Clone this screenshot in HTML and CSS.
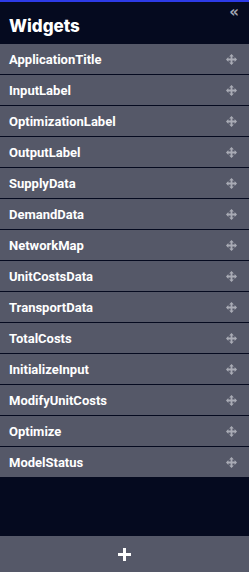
FILE: index.html
```html
<!DOCTYPE html>
<html lang="en">
<head>
  <meta charset="UTF-8" />
  <title>Widgets</title>
  <link rel="stylesheet" href="styles.css">
</head>
<body>
  <div class="panel">
    <div class="panel-head">
      <h1>Widgets</h1>
      <span class="collapse">&laquo;</span>
    </div>
    <div class="widget-list">
      <div class="widget-row"><span>ApplicationTitle</span><svg class="move" viewBox="0 0 12 12"><path d="M6 0L3.4 2.6h1.6v2.4H2.6V3.4L0 6l2.6 2.6V7h2.4v2.4H3.4L6 12l2.6-2.6H7V7h2.4v1.6L12 6 9.4 3.4V5H7V2.6h1.6z"/></svg></div>
      <div class="widget-row"><span>InputLabel</span><svg class="move" viewBox="0 0 12 12"><path d="M6 0L3.4 2.6h1.6v2.4H2.6V3.4L0 6l2.6 2.6V7h2.4v2.4H3.4L6 12l2.6-2.6H7V7h2.4v1.6L12 6 9.4 3.4V5H7V2.6h1.6z"/></svg></div>
      <div class="widget-row"><span>OptimizationLabel</span><svg class="move" viewBox="0 0 12 12"><path d="M6 0L3.4 2.6h1.6v2.4H2.6V3.4L0 6l2.6 2.6V7h2.4v2.4H3.4L6 12l2.6-2.6H7V7h2.4v1.6L12 6 9.4 3.4V5H7V2.6h1.6z"/></svg></div>
      <div class="widget-row"><span>OutputLabel</span><svg class="move" viewBox="0 0 12 12"><path d="M6 0L3.4 2.6h1.6v2.4H2.6V3.4L0 6l2.6 2.6V7h2.4v2.4H3.4L6 12l2.6-2.6H7V7h2.4v1.6L12 6 9.4 3.4V5H7V2.6h1.6z"/></svg></div>
      <div class="widget-row"><span>SupplyData</span><svg class="move" viewBox="0 0 12 12"><path d="M6 0L3.4 2.6h1.6v2.4H2.6V3.4L0 6l2.6 2.6V7h2.4v2.4H3.4L6 12l2.6-2.6H7V7h2.4v1.6L12 6 9.4 3.4V5H7V2.6h1.6z"/></svg></div>
      <div class="widget-row"><span>DemandData</span><svg class="move" viewBox="0 0 12 12"><path d="M6 0L3.4 2.6h1.6v2.4H2.6V3.4L0 6l2.6 2.6V7h2.4v2.4H3.4L6 12l2.6-2.6H7V7h2.4v1.6L12 6 9.4 3.4V5H7V2.6h1.6z"/></svg></div>
      <div class="widget-row"><span>NetworkMap</span><svg class="move" viewBox="0 0 12 12"><path d="M6 0L3.4 2.6h1.6v2.4H2.6V3.4L0 6l2.6 2.6V7h2.4v2.4H3.4L6 12l2.6-2.6H7V7h2.4v1.6L12 6 9.4 3.4V5H7V2.6h1.6z"/></svg></div>
      <div class="widget-row"><span>UnitCostsData</span><svg class="move" viewBox="0 0 12 12"><path d="M6 0L3.4 2.6h1.6v2.4H2.6V3.4L0 6l2.6 2.6V7h2.4v2.4H3.4L6 12l2.6-2.6H7V7h2.4v1.6L12 6 9.4 3.4V5H7V2.6h1.6z"/></svg></div>
      <div class="widget-row"><span>TransportData</span><svg class="move" viewBox="0 0 12 12"><path d="M6 0L3.4 2.6h1.6v2.4H2.6V3.4L0 6l2.6 2.6V7h2.4v2.4H3.4L6 12l2.6-2.6H7V7h2.4v1.6L12 6 9.4 3.4V5H7V2.6h1.6z"/></svg></div>
      <div class="widget-row"><span>TotalCosts</span><svg class="move" viewBox="0 0 12 12"><path d="M6 0L3.4 2.6h1.6v2.4H2.6V3.4L0 6l2.6 2.6V7h2.4v2.4H3.4L6 12l2.6-2.6H7V7h2.4v1.6L12 6 9.4 3.4V5H7V2.6h1.6z"/></svg></div>
      <div class="widget-row"><span>InitializeInput</span><svg class="move" viewBox="0 0 12 12"><path d="M6 0L3.4 2.6h1.6v2.4H2.6V3.4L0 6l2.6 2.6V7h2.4v2.4H3.4L6 12l2.6-2.6H7V7h2.4v1.6L12 6 9.4 3.4V5H7V2.6h1.6z"/></svg></div>
      <div class="widget-row"><span>ModifyUnitCosts</span><svg class="move" viewBox="0 0 12 12"><path d="M6 0L3.4 2.6h1.6v2.4H2.6V3.4L0 6l2.6 2.6V7h2.4v2.4H3.4L6 12l2.6-2.6H7V7h2.4v1.6L12 6 9.4 3.4V5H7V2.6h1.6z"/></svg></div>
      <div class="widget-row"><span>Optimize</span><svg class="move" viewBox="0 0 12 12"><path d="M6 0L3.4 2.6h1.6v2.4H2.6V3.4L0 6l2.6 2.6V7h2.4v2.4H3.4L6 12l2.6-2.6H7V7h2.4v1.6L12 6 9.4 3.4V5H7V2.6h1.6z"/></svg></div>
      <div class="widget-row"><span>ModelStatus</span><svg class="move" viewBox="0 0 12 12"><path d="M6 0L3.4 2.6h1.6v2.4H2.6V3.4L0 6l2.6 2.6V7h2.4v2.4H3.4L6 12l2.6-2.6H7V7h2.4v1.6L12 6 9.4 3.4V5H7V2.6h1.6z"/></svg></div>
    </div>
    <button class="add-btn"><svg class="plus" viewBox="0 0 13 13"><path d="M5 0h3v5h5v3H8v5H5V8H0V5h5z"/></svg></button>
  </div>
</body>
</html>
```

FILE: styles.css
```css
body {
  margin: 0;
  background: #050a1f;
  font-family: Roboto, sans-serif;
}
.panel {
  height: 572px;
  display: flex;
  flex-direction: column;
  background: #050a1f;
  border-top: 2px solid #2d3be6;
  box-sizing: border-box;
}
.panel-head {
  height: 42px;
  position: relative;
  display: flex;
  align-items: center;
  padding-left: 9px;
}
.panel-head h1 {
  margin: 0;
  padding-top: 5px;
  font-family: Inter, sans-serif;
  font-size: 17px;
  font-weight: 800;
  color: #ffffff;
}
.collapse {
  position: absolute;
  top: 0;
  right: 10px;
  color: #a3a6b3;
  font-family: "DejaVu Sans", sans-serif;
  font-size: 15px;
  font-weight: 700;
  line-height: 20px;
}
.widget-list {
  flex: 1;
}
.widget-row {
  height: 30px;
  background: #555868;
  border-bottom: 1px solid #050a1f;
  display: flex;
  align-items: center;
  justify-content: space-between;
  padding: 0 12px 0 9px;
  color: #ffffff;
  font-size: 13px;
  font-weight: 700;
}
.widget-row:last-child {
  border-bottom: none;
}
.move {
  width: 11px;
  height: 11px;
  fill: #a9abb5;
}
.add-btn {
  height: 36px;
  border: none;
  background: #555868;
  padding: 0;
  display: flex;
  align-items: center;
  justify-content: center;
}
.plus {
  width: 13px;
  height: 13px;
  fill: #ffffff;
}
```
